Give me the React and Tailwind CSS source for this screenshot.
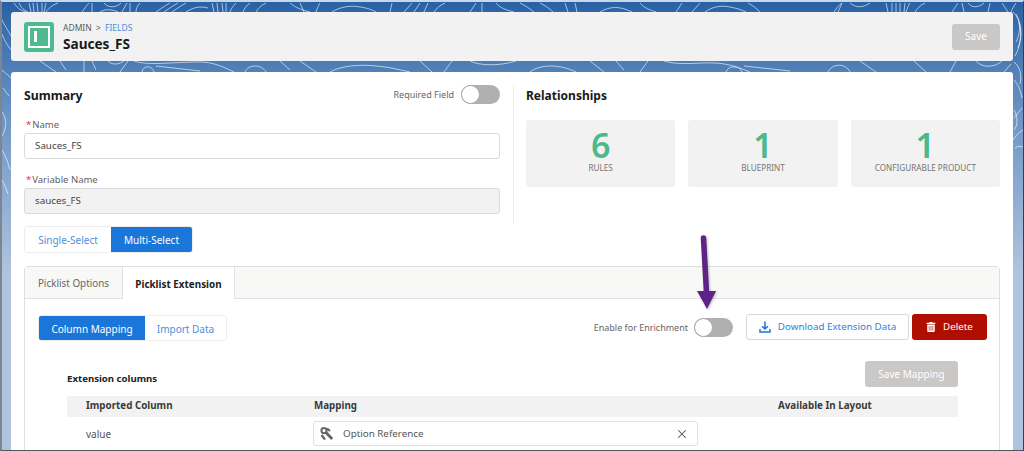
import React from "react";
import { FaTrashAlt } from "react-icons/fa";
import { X } from "lucide-react";

const contours = [
  "M14 3C18 9 22 11 26 12","M19 3C21 8 24 10 28 12","M29 3L31 12","M33 3L34 12","M37 3L38 12","M42 3L42 12","M46 3C45 7 45 9 44 12","M58 3C52 5 48 9 46 12",
  "M82 12C85 8 87 5 89 3","M92 3L92 12","M100 12C104 9 112 9 118 12","M104 3C108 8 116 8 121 3","M127 3L122 12","M130 3L130 12","M140 3C137 6 136 9 136 12",
  "M156 12C162 8 166 5 170 3","M164 12C170 8 174 5 178 3","M172 12C178 8 182 5 186 3","M186 12C194 7 200 6 208 8","M212 3L214 12","M217 3L218 12","M222 3L223 12","M226 3L226 12","M236 3C233 6 231 9 230 12","M250 3C246 6 244 9 243 12",
  "M266 3C260 6 258 9 256 12","M290 3C296 8 302 10 310 12","M300 3L304 12","M320 3C318 6 317 9 316 12","M332 12C340 7 350 5 360 7C368 8 372 10 376 12","M392 3L390 12","M412 3L404 12","M420 3L414 12","M428 3L424 12","M445 3C440 5 436 9 434 12",
  "M470 12L476 3","M482 3L482 12","M496 3C500 8 506 10 514 12","M520 3C526 6 530 9 534 12","M540 3C546 6 550 9 553 12","M565 3L568 12","M575 3L577 12","M600 12C610 6 620 6 632 12","M640 3C644 8 650 10 656 12","M676 12L682 3","M692 12L700 3","M705 12C712 7 720 5 730 7C736 8 742 10 746 12",
  "M760 12C756 8 752 5 748 3","M842 3C838 6 836 9 834 12","M838 12L842 3","M850 3C856 8 862 8 870 3","M886 3L888 12","M892 3L892 12","M896 3L896 12","M900 3L900 12","M905 3L904 12","M910 3C908 6 907 9 906 12","M925 3C920 5 917 9 915 12","M952 12L958 3","M962 3L964 12","M968 3C972 8 978 8 984 3","M990 3L988 12","M1002 3C1004 6 1006 9 1008 12","M1016 3C1014 6 1012 9 1011 12",
  "M40 61L56 72","M60 61L66 70","M84 61L84 72","M92 61L96 70","M108 61C112 65 118 65 124 61","M128 61L120 72","M134 61C150 66 170 62 200 62C212 62 222 66 234 72","M142 72C143 65 152 65 154 72","M156 66L200 71","M245 72C248 64 262 64 266 72",
  "M280 61L290 70","M300 61L316 72","M330 72C340 66 360 64 376 66C390 67 400 70 410 72","M420 61L432 72","M444 72L452 61","M470 61C480 66 500 66 516 61","M530 72C540 64 560 64 576 72","M590 61L604 72","M616 61L624 70","M640 72L648 61","M664 61C680 66 700 62 716 63C730 64 740 68 750 72","M726 72C728 65 740 65 742 72","M744 66L790 71",
  "M828 72C832 63 846 63 850 72","M860 61L876 72","M914 61L926 72","M950 72L956 61","M976 61C982 68 994 68 1002 61","M1004 72L1011 64",
  "M2 20C6 28 9 32 11 36","M2 34C5 42 8 46 11 50","M2 70L11 78","M3 88L9 96","M2 112C7 118 7 128 2 136","M2 150C5 155 8 162 10 170","M2 180C4 184 6 188 8 194",
  "M1013 12C1020 18 1022 30 1016 42","M1016 14C1023 26 1022 44 1015 56","M1019 22C1022 30 1021 40 1018 48","M1014 62C1020 66 1022 76 1020 84","M1014 80C1018 84 1021 92 1022 98","M1014 110C1018 116 1018 126 1014 130","M1014 118L1022 108","M1013 140C1017 134 1020 132 1023 130","M1015 148C1018 146 1020 146 1023 147",
];

function Toggle() {
  return (
    <span className="flex h-[19px] w-[39px] items-center rounded-full bg-[#b0b0b0]">
      <span className="h-[19px] w-[19px] rounded-full border border-[#a8a8a8] bg-white" />
    </span>
  );
}

function Stat({ n, label }) {
  return (
    <div className="flex h-[67px] flex-1 flex-col items-center rounded-[3px] bg-[#f2f2f2] pt-[7px]">
      <span className="text-[34px] leading-[36px] font-semibold text-[#4bb98c]">{n}</span>
      <span className="text-[8.2px] leading-[10px] text-[#757575]">{label}</span>
    </div>
  );
}

function Field({ label, value, disabled }) {
  return (
    <div>
      <div className="pl-[2px] text-[9.5px] leading-[15px] text-[#5f5f5f]">
        <span className="mr-[1px] text-[#d9322c]">*</span>
        {label}
      </div>
      <div className={`mt-[1px] flex h-[26px] items-center rounded-[3px] border border-[#dadada] px-[10px] pt-[1px] text-[9.8px] text-[#444] ${disabled ? "bg-[#f2f2f2]" : "bg-white"}`}>
        {value}
      </div>
    </div>
  );
}

export default function App() {
  return (
    <div className="h-[451px] w-[1024px] overflow-hidden bg-white" style={{ fontFamily: '"Noto Sans", sans-serif' }}>
      <div className="relative h-[451px] overflow-hidden border-t-2 border-r border-b border-l-2 border-t-[#c9d6e6] border-r-[#2f3f5c] border-b-[#555] border-l-[#7d8590] bg-gradient-to-b from-[#2861a4] via-[#6b94c4] via-25% to-[#afc3de] to-60%">
        <svg className="pointer-events-none absolute top-[-2px] left-[-2px]" width="1024" height="451" fill="none" stroke="#ffffff" strokeOpacity="0.6" strokeWidth="1">
          {contours.map((d, i) => <path key={i} d={d} />)}
        </svg>

        <div className="relative flex h-full flex-col gap-[11px] pt-[10px] pr-[10px] pl-[9px]">
          <header className="flex h-[49px] shrink-0 items-center rounded-[3px] bg-[#f2f2f2] pr-[13px] pl-[13px]">
            <span className="flex h-[30px] w-[30px] items-center justify-center rounded-[3px] bg-[#4fb98f]">
              <span className="flex h-[22px] w-[22px] items-center border-2 border-white bg-[#4fb98f] pl-[4px]">
                <span className="h-[11px] w-[3px] bg-white" />
              </span>
            </span>
            <div className="ml-[9px] flex flex-col">
              <div className="text-[8.5px] leading-[14px] text-[#5c5c5c]">
                ADMIN <span className="mx-[2px]">&gt;</span> <span className="text-[#4c8fdc]">FIELDS</span>
              </div>
              <div className="text-[13.6px] leading-[18px] font-bold text-[#1a1a1a]">Sauces_FS</div>
            </div>
            <button className="ml-auto h-[26px] w-[48px] rounded-[3px] bg-[#c9c8c6] text-[10px] text-white">Save</button>
          </header>

          <main className="min-h-0 flex-1 rounded-t-[3px] bg-white pt-[13px] pr-[13px] pl-[13px]">
            <div className="flex h-[142px]">
              <section className="flex w-[476px] flex-col">
                <div className="flex h-[19px] items-center justify-between">
                  <h2 className="pt-[3px] text-[12.3px] font-bold text-[#1a1a1a]">Summary</h2>
                  <div className="flex items-center gap-[7px]">
                    <span className="pt-[1px] text-[9px] text-[#666]">Required Field</span>
                    <Toggle />
                  </div>
                </div>
                <div className="mt-[13px] flex flex-col gap-[13px]">
                  <Field label="Name" value="Sauces_FS" />
                  <Field label="Variable Name" value="sauces_FS" disabled />
                </div>
              </section>
              <div className="mr-[12px] ml-[13px] h-[138px] w-px bg-[#ececec]" />
              <section className="flex flex-1 flex-col">
                <h2 className="flex h-[19px] items-center pt-[2px] text-[12px] font-bold text-[#1a1a1a]">Relationships</h2>
                <div className="mt-[16px] flex gap-[13px]">
                  <Stat n="6" label="RULES" />
                  <Stat n="1" label="BLUEPRINT" />
                  <Stat n="1" label="CONFIGURABLE PRODUCT" />
                </div>
              </section>
            </div>

            <div className="mt-[-1px] flex h-[27px] w-[169px] overflow-hidden rounded-[3px] border border-[#ececec] text-[10px]">
              <span className="flex w-[86px] items-center justify-center bg-white pt-[1px] text-[#4c8fdc]">Single-Select</span>
              <span className="flex flex-1 items-center justify-center bg-[#1b76d9] pt-[1px] text-white">Multi-Select</span>
            </div>

            <div className="mt-[13px] h-[200px] w-[976px] rounded-t-[4px] border border-[#dedede]">
              <div className="flex h-[32px] border-b border-[#e2e2e2] bg-[#f8f8f7] pt-[1px] text-[9.9px]">
                <span className="flex w-[97px] items-center justify-center pt-[1px] text-[#666]">Picklist Options</span>
                <span className="mb-[-1px] mt-[-1px] flex w-[113px] items-center justify-center border-x border-[#e2e2e2] bg-white pt-[2px] font-bold text-[#222]">Picklist Extension</span>
              </div>

              <div className="flex items-start justify-between pt-[15px] pr-[12px] pl-[13px]">
                <div className="mt-[1px] flex h-[26px] w-[189px] overflow-hidden rounded-[3px] border border-[#ececec] text-[10px]">
                  <span className="flex w-[106px] items-center justify-center bg-[#1b76d9] pt-[2px] text-white">Column Mapping</span>
                  <span className="flex flex-1 items-center justify-center bg-white pt-[2px] text-[#4c8fdc]">Import Data</span>
                </div>
                <div className="flex items-center">
                  <span className="mr-[6px] pt-[1px] text-[9px] text-[#666]">Enable for Enrichment</span>
                  <Toggle />
                  <button className="ml-[13px] flex h-[26px] w-[163px] items-center justify-center gap-[7px] rounded-[3px] border border-[#d8d8d8] bg-white text-[9.8px] text-[#2f80de]">
                    <svg width="12" height="12" viewBox="0 0 12 12" fill="none" stroke="#1b76d9" strokeWidth="1.5">
                      <path d="M6 0.5V8M3 5.2L6 8L9 5.2M1 8V11H11V8" />
                    </svg>
                    Download Extension Data
                  </button>
                  <button className="ml-[3px] flex h-[26px] w-[75px] items-center justify-center gap-[7px] rounded-[3px] bg-[#b00e00] text-[9.8px] text-white">
                    <FaTrashAlt className="h-[10px] w-[10px]" />
                    Delete
                  </button>
                </div>
              </div>

              <div className="mt-[20px] ml-[42px] w-[891px]">
                <div className="flex h-[26px] items-center justify-between">
                  <span className="pt-[11px] text-[9.65px] font-bold text-[#222]">Extension columns</span>
                  <button className="h-[26px] w-[93px] rounded-[3px] bg-[#c9c8c6] text-[10px] text-white">Save Mapping</button>
                </div>
                <div className="mt-[9px] grid h-[21px] grid-cols-[247px_464px_180px] items-center bg-[#f2f2f2] text-[9.8px] font-bold text-[#3a3a3a]">
                  <span className="pl-[19px]">Imported Column</span>
                  <span>Mapping</span>
                  <span>Available In Layout</span>
                </div>
                <div className="mt-[4px] grid grid-cols-[247px_464px_180px] items-center text-[10px] text-[#555]">
                  <span className="pt-[1px] pl-[19px]">value</span>
                  <div className="ml-[-1px] flex h-[25px] w-[385px] items-center rounded-[3px] border border-[#e0e0e0] pr-[8px] pl-[6px]">
                    <svg width="14" height="14" viewBox="0 0 14 14" fill="none" stroke="#666">
                      <circle cx="4" cy="3.6" r="2.6" strokeWidth="2" />
                      <path d="M6 5.5L12.2 12" strokeWidth="2.8" />
                      <path d="M1.5 8L5 12.5M7 1.5L10 4" strokeWidth="2.2" />
                    </svg>
                    <span className="ml-[9px] pt-[2px] text-[9.8px]">Option Reference</span>
                    <X className="ml-auto h-[14px] w-[14px] text-[#555]" strokeWidth={1.8} />
                  </div>
                </div>
              </div>
            </div>
          </main>
        </div>

        <svg className="pointer-events-none absolute top-[-2px] left-[-2px]" width="1024" height="451" style={{ filter: "drop-shadow(1px 1px 1px rgba(0,0,0,.25))" }}>
          <path d="M703.5 238L706.5 293" stroke="#5f2286" strokeWidth="5.5" strokeLinecap="round" fill="none" />
          <path d="M697 291H716L707 309Z" fill="#5f2286" />
        </svg>
      </div>
    </div>
  );
}
